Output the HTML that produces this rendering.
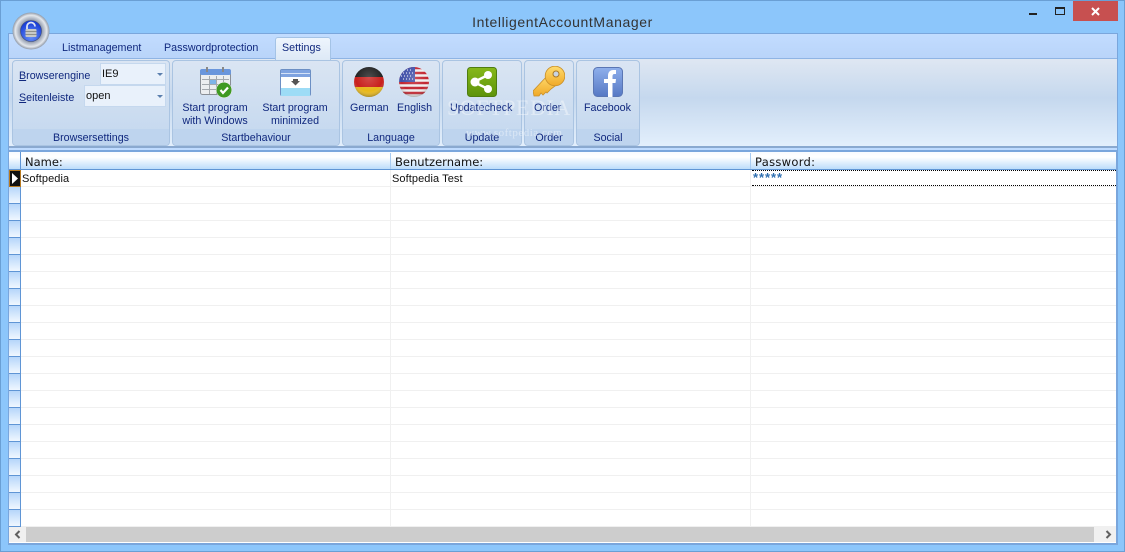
<!DOCTYPE html>
<html><head><meta charset="utf-8">
<style>
html,body{margin:0;padding:0}
body{width:1125px;height:552px;overflow:hidden;position:relative;background:#8cc6fb;font-family:"Liberation Sans",sans-serif;font-size:10.7px;color:#10287e}
div,span,svg{position:absolute;box-sizing:border-box}
.t{white-space:nowrap;text-align:center}
.g{top:60px;height:86px;border:1px solid #aac4e2;border-radius:4px;background:linear-gradient(#dae5f3,#c6d9ef 85%);overflow:hidden}
.g .c{left:0;right:0;bottom:0;height:16px;background:#bed4ee;text-align:center;line-height:14px;padding-top:2px;color:#10287e}
.rh{left:9px;width:11px;height:17px;background:linear-gradient(#b6d6fa,#f0f7ff);border-bottom:1px solid #5f95d5}
.rl{left:21px;right:9px;height:1px;background:#f0f0f0}
.h{top:155px;font-family:"DejaVu Sans",sans-serif;font-size:11.5px;color:#111;white-space:nowrap}
.cell{top:173px;color:#111;white-space:nowrap;font-size:11px;letter-spacing:.08px}
.cb{background:#e9f1fb;border:1px solid #c5d8ee;height:22px;color:#111;padding:4px 1px;font-size:11px}
.ar{width:0;height:0;border-left:3px solid transparent;border-right:3px solid transparent;border-top:3px solid #5b7fae}
u{text-decoration:underline}
</style></head><body>
<div style="left:0;top:0;width:1125px;height:552px;border:1px solid #6a9fd4"></div>
<div class="t" style="left:0;width:1125px;top:14px;font-size:14px;color:#333;letter-spacing:.6px">IntelligentAccountManager</div>
<div style="left:1073px;top:1px;width:45px;height:20px;background:#c75050"></div>
<svg style="left:1073px;top:1px" width="45" height="20"><path d="M19 7l7 7M26 7l-7 7" stroke="#fff" stroke-width="2"/></svg>
<div style="left:1029px;top:13px;width:8px;height:2px;background:#222"></div>
<div style="left:1055px;top:7px;width:10px;height:8px;border:1px solid #222;border-top-width:2px"></div>

<div style="left:8px;top:33px;width:1110px;height:512px;background:#bfdbff;border:1px solid #7aa6dc"></div>
<div style="left:9px;top:34px;width:1108px;height:24px;background:linear-gradient(#c2dcff,#b9d4f9)"></div>

<div style="left:9px;top:58px;width:1108px;height:90px;background:linear-gradient(#dfe7f2,#c5d8ee 45%,#e3effc);border-top:1px solid #8fb4e4;border-bottom:2px solid #8aa9d0"></div>

<div style="left:275px;top:37px;width:56px;height:23px;background:linear-gradient(#eef5fd,#dde9f6);border:1px solid #a4c3e6;border-bottom:none;border-radius:3px 3px 0 0"></div>
<div class="t" style="left:62px;top:42px;letter-spacing:.03px">Listmanagement</div>
<div class="t" style="left:164px;top:42px;letter-spacing:.03px">Passwordprotection</div>
<div class="t" style="left:282px;top:42px;letter-spacing:.03px">Settings</div>

<div class="g" style="left:12px;width:158px"><div class="c">Browsersettings</div></div>
<div class="g" style="left:172px;width:168px"><div class="c">Startbehaviour</div></div>
<div class="g" style="left:342px;width:98px"><div class="c">Language</div></div>
<div class="g" style="left:442px;width:80px"><div class="c">Update</div></div>
<div class="g" style="left:524px;width:50px"><div class="c">Order</div></div>
<div class="g" style="left:576px;width:64px"><div class="c">Social</div></div>

<div class="t" style="left:19px;top:70px"><u>B</u>rowserengine</div>
<div class="t" style="left:19px;top:92px"><u>S</u>eitenleiste</div>
<div class="cb" style="left:100px;top:63px;width:66px">IE9</div>
<div class="ar" style="left:157px;top:73px"></div>
<div class="cb" style="left:84px;top:85px;width:82px">open</div>
<div class="ar" style="left:157px;top:95px"></div>

<!-- calendar -->
<svg style="left:199px;top:67px" width="34" height="32" viewBox="0 0 34 32">
<rect x="1.500" y="2.500" width="30" height="25" rx="2" fill="#eceef0" stroke="#8a8f96"/>
<rect x="1" y="2" width="31" height="6" rx="2" fill="#6a96dc"/>
<rect x="7" y="0" width="2" height="5" fill="#888"/><rect x="23" y="0" width="2" height="5" fill="#888"/>
<path d="M3 12.500H30M3 17.500H30M3 22.500H24M10.500 9V27M17.500 9V27M24.500 9V22" stroke="#a4a9ae" fill="none"/>
<rect x="11" y="13" width="6" height="4" fill="#7db4e8"/>
<circle cx="25" cy="23" r="7.800" fill="#3f9a22" stroke="#eee" stroke-width=".5"/>
<path d="M21.500 23l2.500 3 5-5.500" stroke="#fff" stroke-width="2.200" fill="none"/>
</svg>
<!-- minimized -->
<svg style="left:280px;top:69px" width="32" height="28" viewBox="0 0 32 28">
<rect x=".5" y=".5" width="30" height="26" rx="1.500" fill="#fff" stroke="#6c8fc4"/>
<rect x="1" y="1" width="29" height="7" fill="#7fa3e0"/><rect x="1" y="4" width="29" height="1" fill="#d5e2f7"/>
<rect x="1" y="19" width="29" height="8" fill="#9ddcf6"/>
<path d="M11 12h9l-4.500 4.500z" fill="#555"/><rect x="13" y="10" width="5" height="3" fill="#555"/>
</svg>
<div class="t" style="left:175px;width:80px;top:102px;line-height:13px">Start program<br>with Windows</div>
<div class="t" style="left:255px;width:80px;top:102px;line-height:13px">Start program<br>minimized</div>

<!-- flags -->
<svg style="left:353px;top:66px" width="32" height="32" viewBox="0 0 32 32">
<defs><clipPath id="cc"><circle cx="16" cy="16" r="15"/></clipPath>
<radialGradient id="sh" cx=".5" cy=".35" r=".7"><stop offset="0" stop-color="#fff" stop-opacity=".2"/><stop offset=".65" stop-color="#fff" stop-opacity="0"/><stop offset="1" stop-color="#000" stop-opacity=".45"/></radialGradient></defs>
<g clip-path="url(#cc)"><rect width="32" height="11" fill="#222"/><rect y="11" width="32" height="10" fill="#c8201c"/><rect y="21" width="32" height="11" fill="#e8b81a"/></g>
<circle cx="16" cy="16" r="15" fill="url(#sh)"/>
</svg>
<svg style="left:398px;top:66px" width="32" height="32" viewBox="0 0 32 32">
<g clip-path="url(#cc)"><rect width="32" height="32" fill="#eee"/>
<path d="M0 2h32M0 7h32M0 12h32M0 17h32M0 22h32M0 27h32" stroke="#c22530" stroke-width="2.500"/>
<rect width="17" height="16" fill="#3f4fa8"/>
<path d="M3 4h12M5 7h11M3 10h12M5 13h11" stroke="#fff" stroke-dasharray="1 2" fill="none"/></g>
<circle cx="16" cy="16" r="15" fill="url(#sh)"/>
</svg>
<div class="t" style="left:350px;top:102px">German</div>
<div class="t" style="left:397px;top:102px">English</div>

<!-- share -->
<svg style="left:467px;top:67px" width="30" height="31" viewBox="0 0 30 31">
<defs><linearGradient id="gr" x1="0" y1="0" x2="0" y2="1"><stop offset="0" stop-color="#86b81a"/><stop offset="1" stop-color="#5d930b"/></linearGradient></defs>
<rect x=".5" y=".5" width="29" height="29" rx="3" fill="url(#gr)" stroke="#4f7d10"/>
<path d="M21 8L7 15l14 7" stroke="#fff" stroke-width="2.500" fill="none"/>
<circle cx="21" cy="8" r="4" fill="#fff"/><circle cx="8" cy="15" r="4.500" fill="#fff"/><circle cx="21" cy="22" r="4" fill="#fff"/>
</svg>
<!-- key -->
<svg style="left:533px;top:66px" width="32" height="32" viewBox="0 0 32 32">
<defs><linearGradient id="ky" x1="0" y1="0" x2="0" y2="1"><stop offset="0" stop-color="#ffdc70"/><stop offset="1" stop-color="#f0a928"/></linearGradient></defs>
<path d="M15 9L0 25l1 5 5 0 2-3 2 2 3-3 1 1 4-4 4-3z" fill="url(#ky)" stroke="#c9902a" stroke-width=".8"/>
<circle cx="22" cy="10" r="9.800" fill="url(#ky)" stroke="#c9902a" stroke-width=".8"/>
<circle cx="23" cy="8" r="3" fill="#c9d4e4" stroke="#a8792a"/>
</svg>
<!-- facebook -->
<svg style="left:593px;top:67px" width="30" height="31" viewBox="0 0 30 31">
<defs><linearGradient id="fb" x1="0" y1="0" x2="0" y2="1"><stop offset="0" stop-color="#8fb0ec"/><stop offset="1" stop-color="#5678c4"/></linearGradient></defs>
<rect x=".5" y=".5" width="29" height="29" rx="4" fill="url(#fb)" stroke="#5a76b4"/>
<path d="M15 30V16h-4v-4h4V9c0-4 2-6 5.500-6H23v4h-1.500C20 7 19.500 8 19.500 9.500V12H23l-.5 4h-3v14z" fill="#fff"/>
</svg>
<div class="t" style="left:450px;top:102px">Updatecheck</div>
<div class="t" style="left:534px;top:102px">Order</div>
<div class="t" style="left:584px;top:102px">Facebook</div>

<div style="left:447px;top:95px;font-family:'Liberation Serif',serif;font-size:22px;color:rgba(255,255,255,.4);white-space:nowrap;letter-spacing:.6px">SOFTPEDIA</div>
<div style="left:466px;top:127px;font-family:'Liberation Serif',serif;font-size:11px;color:rgba(255,255,255,.45);white-space:nowrap;letter-spacing:.5px">www.softpedia.com</div>

<!-- grid -->
<div style="left:8px;top:150px;width:1110px;height:395px;background:#fff;border:2px solid #7aa6dc;border-width:2px 2px 2px 1px"></div>
<div style="left:9px;top:152px;width:1107px;height:18px;background:linear-gradient(#f8fbff,#fff 30%,#bcdcfb);border-bottom:1px solid #5f95d5"></div>
<div style="left:20px;top:152px;width:1px;height:375px;background:#5f95d5"></div>
<div style="left:390px;top:153px;width:1px;height:16px;background:#a7cbf2"></div>
<div style="left:750px;top:153px;width:1px;height:16px;background:#a7cbf2"></div>
<div style="left:390px;top:170px;width:1px;height:357px;background:#f0f0f0"></div>
<div style="left:750px;top:170px;width:1px;height:357px;background:#f0f0f0"></div>
<div class="h" style="left:25px">Name:</div>
<div class="h" style="left:395px">Benutzername:</div>
<div class="h" style="left:755px;letter-spacing:.3px">Password:</div>
<div class="cell" style="left:22px">Softpedia</div>
<div class="cell" style="left:392px">Softpedia Test</div>
<div class="cell" style="left:753px;top:174px;color:#2f6fb0;font-size:13px;font-weight:bold;letter-spacing:.95px;line-height:8px">*****</div>
<div style="left:752px;top:170px;width:364px;height:1px;border-top:1px dotted #000"></div>
<div style="left:752px;top:185px;width:364px;height:1px;border-top:1px dotted #000"></div>

<div class="rh" style="top:170px"></div><div class="rh" style="top:187px"></div><div class="rh" style="top:204px"></div><div class="rh" style="top:221px"></div><div class="rh" style="top:238px"></div><div class="rh" style="top:255px"></div><div class="rh" style="top:272px"></div><div class="rh" style="top:289px"></div><div class="rh" style="top:306px"></div><div class="rh" style="top:323px"></div><div class="rh" style="top:340px"></div><div class="rh" style="top:357px"></div><div class="rh" style="top:374px"></div><div class="rh" style="top:391px"></div><div class="rh" style="top:408px"></div><div class="rh" style="top:425px"></div><div class="rh" style="top:442px"></div><div class="rh" style="top:459px"></div><div class="rh" style="top:476px"></div><div class="rh" style="top:493px"></div><div class="rh" style="top:510px"></div>
<div class="rl" style="top:186px"></div><div class="rl" style="top:203px"></div><div class="rl" style="top:220px"></div><div class="rl" style="top:237px"></div><div class="rl" style="top:254px"></div><div class="rl" style="top:271px"></div><div class="rl" style="top:288px"></div><div class="rl" style="top:305px"></div><div class="rl" style="top:322px"></div><div class="rl" style="top:339px"></div><div class="rl" style="top:356px"></div><div class="rl" style="top:373px"></div><div class="rl" style="top:390px"></div><div class="rl" style="top:407px"></div><div class="rl" style="top:424px"></div><div class="rl" style="top:441px"></div><div class="rl" style="top:458px"></div><div class="rl" style="top:475px"></div><div class="rl" style="top:492px"></div><div class="rl" style="top:509px"></div><div class="rl" style="top:526px"></div>

<div style="left:9px;top:170px;width:12px;height:17px;background:#111;border:1px solid #b87a20"></div>
<svg style="left:12px;top:173px" width="7" height="11"><path d="M0 0l6 5.500L0 11z" fill="#fff"/></svg>

<!-- scrollbar -->
<div style="left:9px;top:527px;width:1107px;height:15px;background:#cdcdcd"></div>
<div style="left:9px;top:527px;width:17px;height:15px;background:#f0f0f0"></div>
<div style="left:1094px;top:527px;width:22px;height:15px;background:#f0f0f0"></div>
<svg style="left:14px;top:530px" width="7" height="9"><path d="M5.500 1L2 4.500 5.500 8" stroke="#606060" stroke-width="2" fill="none"/></svg>
<svg style="left:1105px;top:530px" width="7" height="9"><path d="M1.500 1L5 4.500 1.500 8" stroke="#606060" stroke-width="2" fill="none"/></svg>

<!-- orb -->
<svg style="left:12px;top:12px" width="38" height="38" viewBox="0 0 38 38">
<defs><radialGradient id="o" cx=".5" cy=".5" r=".5"><stop offset=".55" stop-color="#8a94a6"/><stop offset=".85" stop-color="#e4e8ed"/><stop offset="1" stop-color="#8f98a6"/></radialGradient>
<radialGradient id="b" cx=".5" cy=".75" r=".65"><stop offset="0" stop-color="#6a94f8"/><stop offset="1" stop-color="#1a3fd8"/></radialGradient></defs>
<circle cx="19" cy="19" r="18.500" fill="url(#o)"/>
<circle cx="19" cy="19" r="10.500" fill="url(#b)" stroke="#3a4a7a" stroke-width=".6"/>
<path d="M15 17v-2.500a4 4 0 0 1 8 0" fill="none" stroke="#dfe6f5" stroke-width="1.800"/>
<rect x="13.500" y="17" width="11" height="8" rx="1" fill="#c7c9c6"/><path d="M13.500 19.500h11M13.500 22.500h11" stroke="#8f918c"/>
</svg>
</body></html>
